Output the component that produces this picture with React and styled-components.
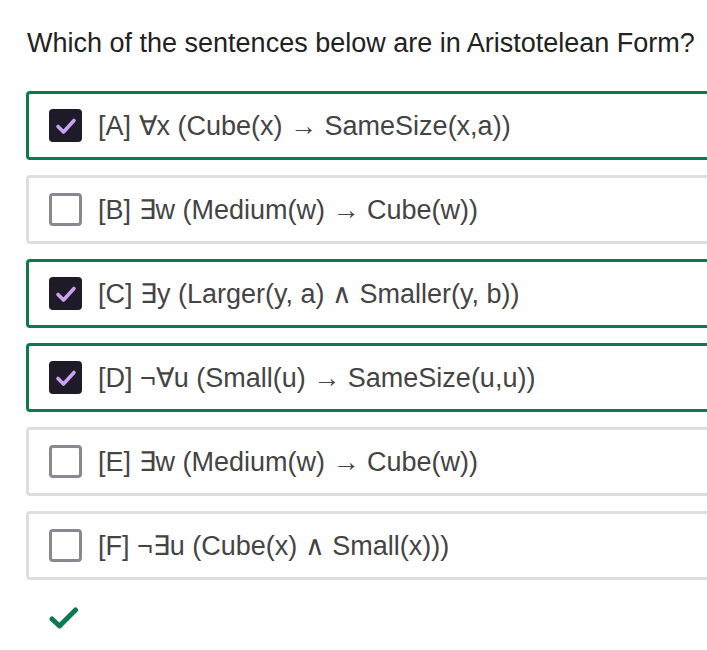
import React, { useState } from "react";
import styled, { createGlobalStyle } from "styled-components";

const GlobalStyles = createGlobalStyle`
  body {
    margin: 0;
    background: #fff;
    font-family: "Liberation Sans", Arial, sans-serif;
    overflow: hidden;
  }
`;

const options = [
  { id: "A", text: "∀x (Cube(x) → SameSize(x,a))", checked: true },
  { id: "B", text: "∃w (Medium(w) → Cube(w))", checked: false },
  { id: "C", text: "∃y (Larger(y, a) ∧ Smaller(y, b))", checked: true },
  { id: "D", text: "¬∀u (Small(u) → SameSize(u,u))", checked: true },
  { id: "E", text: "∃w (Medium(w) → Cube(w))", checked: false },
  { id: "F", text: "¬∃u (Cube(x) ∧ Small(x)))", checked: false },
];

const App = () => {
  const [state, setState] = useState(options);

  const toggle = (id) =>
    setState((prev) =>
      prev.map((o) => (o.id === id ? { ...o, checked: !o.checked } : o))
    );

  return (
    <Page>
      <GlobalStyles />
      <Question>Which of the sentences below are in Aristotelean Form?</Question>
      <List>
        {state.map((o) => (
          <Option key={o.id} $checked={o.checked} onClick={() => toggle(o.id)}>
            <Box $checked={o.checked}>
              {o.checked && (
                <svg width="22" height="18" viewBox="0 0 22 18">
                  <path
                    d="M3 9.5 L8.5 15 L19 3.5"
                    fill="none"
                    stroke="#c9a2f2"
                    strokeWidth="3.6"
                    strokeLinecap="round"
                    strokeLinejoin="round"
                  />
                </svg>
              )}
            </Box>
            <Label>
              [{o.id}] {o.text}
            </Label>
          </Option>
        ))}
      </List>
      <Result>
        <svg width="30" height="24" viewBox="0 0 30 24">
          <path
            d="M3 13 L10.5 20 L26.5 4"
            fill="none"
            stroke="#0b7a4f"
            strokeWidth="5"
            strokeLinecap="round"
            strokeLinejoin="round"
          />
        </svg>
      </Result>
    </Page>
  );
};

const Page = styled.div`
  padding: 28px 0 0 26px;
`;

const Question = styled.h1`
  margin: 0 0 32px 1px;
  font-size: 27px;
  font-weight: normal;
  color: #222;
  line-height: 31px;
  white-space: nowrap;
`;

const List = styled.div`
  display: flex;
  flex-direction: column;
  gap: 15px;
  width: 720px;
`;

const Option = styled.div`
  display: flex;
  align-items: center;
  gap: 16px;
  height: 63px;
  padding-left: 20px;
  border: 3px solid ${(p) => (p.$checked ? "#0b7a4f" : "#dedede")};
  border-radius: 4px;
  cursor: pointer;
`;

const Box = styled.div`
  box-sizing: border-box;
  width: 33px;
  height: 33px;
  display: flex;
  align-items: center;
  justify-content: center;
  border-radius: 4px;
  background: ${(p) => (p.$checked ? "#1e1a27" : "#fff")};
  border: ${(p) => (p.$checked ? "none" : "3px solid #8b8894")};
`;

const Label = styled.span`
  font-size: 27px;
  color: #444;
  white-space: nowrap;
`;

const Result = styled.div`
  padding: 26px 0 0 23px;
`;

export default App;
